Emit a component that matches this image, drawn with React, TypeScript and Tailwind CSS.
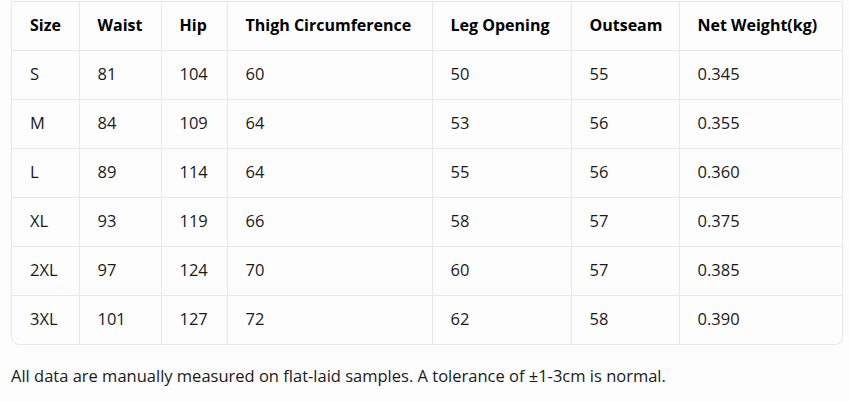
const headers = ["Size", "Waist", "Hip", "Thigh Circumference", "Leg Opening", "Outseam", "Net Weight(kg)"];

const rows = [
  ["S", "81", "104", "60", "50", "55", "0.345"],
  ["M", "84", "109", "64", "53", "56", "0.355"],
  ["L", "89", "114", "64", "55", "56", "0.360"],
  ["XL", "93", "119", "66", "58", "57", "0.375"],
  ["2XL", "97", "124", "70", "60", "57", "0.385"],
  ["3XL", "101", "127", "72", "62", "58", "0.390"],
];

const widths = ["w-[67px]", "w-[82px]", "w-[66px]", "w-[205px]", "w-[139px]", "w-[108px]", "w-[163px]"];

export default function App() {
  return (
    <div className="min-h-screen bg-[#fdfdfd] pt-px text-[#1a1a1a]" style={{ fontFamily: '"Open Sans", "Noto Sans", sans-serif' }}>
      <div className="ml-[11px] w-[832px] overflow-hidden rounded-b-[8px] border border-[#e8e8e8]">
        <table className="w-full table-fixed border-collapse text-[16.5px]">
          <colgroup>
            {widths.map((w, i) => (
              <col key={i} className={w} />
            ))}
          </colgroup>
          <thead>
            <tr className="h-[48px] border-b border-[#e8e8e8]">
              {headers.map((h, i) => (
                <th
                  key={h}
                  className={`pb-[2px] pl-[18px] text-left text-[16px] font-bold text-black ${i < headers.length - 1 ? "border-r border-[#e8e8e8]" : ""}`}
                >
                  {h}
                </th>
              ))}
            </tr>
          </thead>
          <tbody>
            {rows.map((r, ri) => (
              <tr key={ri} className={`h-[49px] ${ri < rows.length - 1 ? "border-b border-[#e8e8e8]" : ""}`}>
                {r.map((c, ci) => (
                  <td
                    key={ci}
                    className={`pl-[18px] text-left ${ci < r.length - 1 ? "border-r border-[#e8e8e8]" : ""}`}
                  >
                    {c}
                  </td>
                ))}
              </tr>
            ))}
          </tbody>
        </table>
      </div>
      <p className="ml-[11px] mt-[19px] text-[16.5px]">
        All data are manually measured on flat-laid samples. A tolerance of ±1-3cm is normal.
      </p>
    </div>
  );
}
